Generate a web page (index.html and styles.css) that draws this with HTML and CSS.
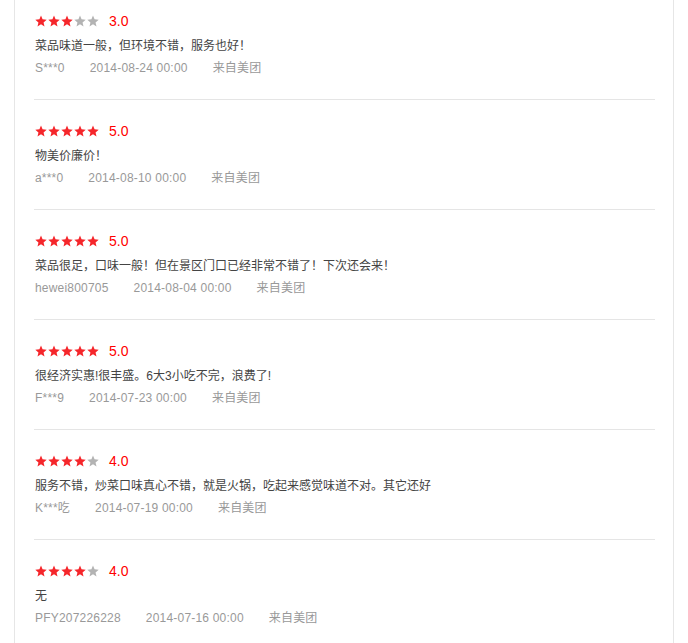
FILE: index.html
```html
<!DOCTYPE html>
<html lang="zh-CN">
<head>
    <meta charset="UTF-8">
    <meta name="viewport" content="width=device-width, initial-scale=1.0">
    <title>评价</title>
    <link rel="stylesheet" href="styles.css">
</head>
<body>
    <svg class="defs" width="0" height="0">
        <symbol id="star" viewBox="0 0 24 24">
            <polygon points="12,1 15.1,8.6 23.4,9.3 17.1,14.8 19,22.9 12,18.6 5,22.9 6.9,14.8 0.6,9.3 8.9,8.6"/>
        </symbol>
    </svg>

    <div class="panel" id="listeAvis"></div>

    <script>
        let avis = [
            { note: 3, texte: "菜品味道一般，但环境不错，服务也好！", user: "S***0", date: "2014-08-24 00:00" },
            { note: 5, texte: "物美价廉价！", user: "a***0", date: "2014-08-10 00:00" },
            { note: 5, texte: "菜品很足，口味一般！但在景区门口已经非常不错了！下次还会来！", user: "hewei800705", date: "2014-08-04 00:00" },
            { note: 5, texte: "很经济实惠!很丰盛。6大3小吃不完，浪费了!", user: "F***9", date: "2014-07-23 00:00" },
            { note: 4, texte: "服务不错，炒菜口味真心不错，就是火锅，吃起来感觉味道不对。其它还好", user: "K***吃", date: "2014-07-19 00:00" },
            { note: 4, texte: "无", user: "PFY207226228", date: "2014-07-16 00:00" }
        ];

        let html = "";
        avis.forEach(a => {
            let etoiles = "";
            for (let i = 0; i < 5; i++) {
                etoiles += `<svg class='star ${i < a.note ? "on" : "off"}'><use href='#star'/></svg>`;
            }
            html += `<div class='review'>
                <div class='rating'><span class='stars'>${etoiles}</span><span class='score'>${a.note}.0</span></div>
                <div class='text'>${a.texte}</div>
                <div class='meta'><span>${a.user}</span><span>${a.date}</span><span>来自美团</span></div>
            </div>`;
        });
        document.getElementById("listeAvis").innerHTML = html;
    </script>
</body>
</html>
```

FILE: styles.css
```css
body { margin: 0; background: #fff; font-family: "Liberation Sans", "Noto Sans CJK SC", sans-serif; font-size: 12px; color: #444; }
.defs { position: absolute; }
.panel { margin-left: 14px; width: 621px; min-height: 643px; padding: 0 18px 0 19px; border-left: 1px solid #e6e6e6; border-right: 1px solid #e6e6e6; }
.review { padding: 21px 0 20px 1px; border-bottom: 1px solid #e5e5e5; }
.review:first-child { padding-top: 11px; }
.rating { display: flex; align-items: center; height: 20px; }
.stars { display: flex; gap: 1px; }
.star { width: 12px; height: 12px; }
.star.on { fill: #f5262b; }
.star.off { fill: #b3b3b3; }
.score { margin-left: 10px; font-size: 14px; color: #f00; }
.text { margin-top: 4px; line-height: 22px; color: #444; }
.meta { display: flex; gap: 25px; line-height: 22px; color: #999; letter-spacing: 0.2px; }
```
